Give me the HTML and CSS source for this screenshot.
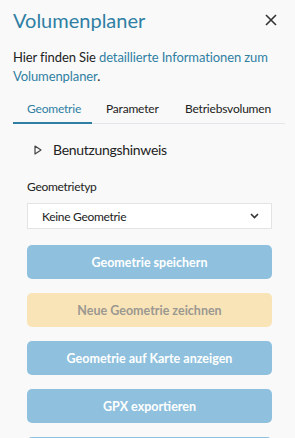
FILE: index.html
```html
<!DOCTYPE html>
<html lang="de">
<head>
<meta charset="utf-8">
<link rel="stylesheet" href="styles.css">
</head>
<body>
<div class="panel">
  <div class="header">
    <h1 class="title">Volumenplaner</h1>
    <button class="close" aria-label="Schließen">
      <svg width="12" height="12" viewBox="0 0 12 12"><path d="M1 1L11 11M11 1L1 11" stroke="#333" stroke-width="1.6" fill="none"/></svg>
    </button>
  </div>
  <p class="intro">Hier finden Sie <a href="#" class="link">detaillierte Informationen zum Volumenplaner</a>.</p>
  <div class="tabs">
    <span class="tab active">Geometrie</span>
    <span class="tab">Parameter</span>
    <span class="tab">Betriebsvolumen</span>
  </div>
  <div class="content">
    <div class="details">
      <svg class="tri" width="8" height="10" viewBox="0 0 8 10"><path d="M1 1L7 5L1 9Z" fill="none" stroke="#444" stroke-width="1.2" stroke-linejoin="round"/></svg>
      <span>Benutzungshinweis</span>
    </div>
    <label class="label">Geometrietyp</label>
    <div class="select">
      <span>Keine Geometrie</span>
      <svg width="9" height="6" viewBox="0 0 9 6"><path d="M1 1L4.5 4.5L8 1" fill="none" stroke="#333" stroke-width="1.6"/></svg>
    </div>
    <div class="buttons">
      <button class="btn blue">Geometrie speichern</button>
      <button class="btn yellow">Neue Geometrie zeichnen</button>
      <button class="btn blue">Geometrie auf Karte anzeigen</button>
      <button class="btn blue">GPX exportieren</button>
      <button class="btn blue">Geometrie löschen</button>
    </div>
  </div>
</div>
</body>
</html>
```

FILE: styles.css
```css
html, body {
  margin: 0;
  padding: 0;
  background: #f9f9f9;
  overflow: hidden;
}
body {
  font-family: "Lato", "Open Sans", sans-serif;
  color: #222;
}
.panel {
  padding: 0 10px 0 13px;
  width: 272px;
}
.header {
  display: flex;
  justify-content: space-between;
  align-items: center;
  height: 40px;
}
.title {
  margin: 0;
  font-size: 20px;
  font-weight: 400;
  color: #2f7fa3;
}
.close {
  border: 0;
  background: none;
  padding: 0;
  margin-right: 8px;
  display: flex;
}
.intro {
  margin: 8px 0 0;
  font-size: 13px;
  letter-spacing: -0.1px;
  line-height: 19px;
}
.link {
  color: #2f7fa3;
  text-decoration: none;
}
.tabs {
  display: flex;
  margin-top: 15px;
  border-bottom: 1px solid #e3e6ea;
}
.tab {
  box-sizing: border-box;
  width: 79px;
  flex: none;
  white-space: nowrap;
  font-size: 12px;
  letter-spacing: -0.2px;
  padding: 0 0 6px 14px;
  color: #222;
}
.tab.active {
  color: #2f7fa3;
  border-bottom: 2px solid #2f7fa3;
  margin-bottom: -1px;
}
.content {
  padding: 0 13px 0 14px;
}
.details {
  display: flex;
  align-items: center;
  margin-top: 17px;
  font-size: 14px;
  letter-spacing: -0.3px;
  color: #222;
}
.tri {
  margin: 0 11px 0 7px;
}
.label {
  display: block;
  margin-top: 21px;
  font-size: 12px;
  letter-spacing: -0.3px;
}
.select {
  margin-top: 9px;
  height: 26px;
  box-sizing: border-box;
  border: 1px solid #e4e4e4;
  background: #fff;
  display: flex;
  justify-content: space-between;
  align-items: center;
  padding: 0 12px 0 14px;
  font-size: 12px;
  letter-spacing: -0.3px;
}
.buttons {
  display: flex;
  flex-direction: column;
  gap: 14px;
  margin-top: 16px;
}
.btn {
  height: 34px;
  border: 0;
  border-radius: 5px;
  font-family: "Lato", sans-serif;
  font-weight: 700;
  font-size: 12.5px;
  color: #fff;
}
.btn.blue { background: #8fc1de; }
.btn.yellow { background: #f9e4b8; color: #9b9890; }
```
